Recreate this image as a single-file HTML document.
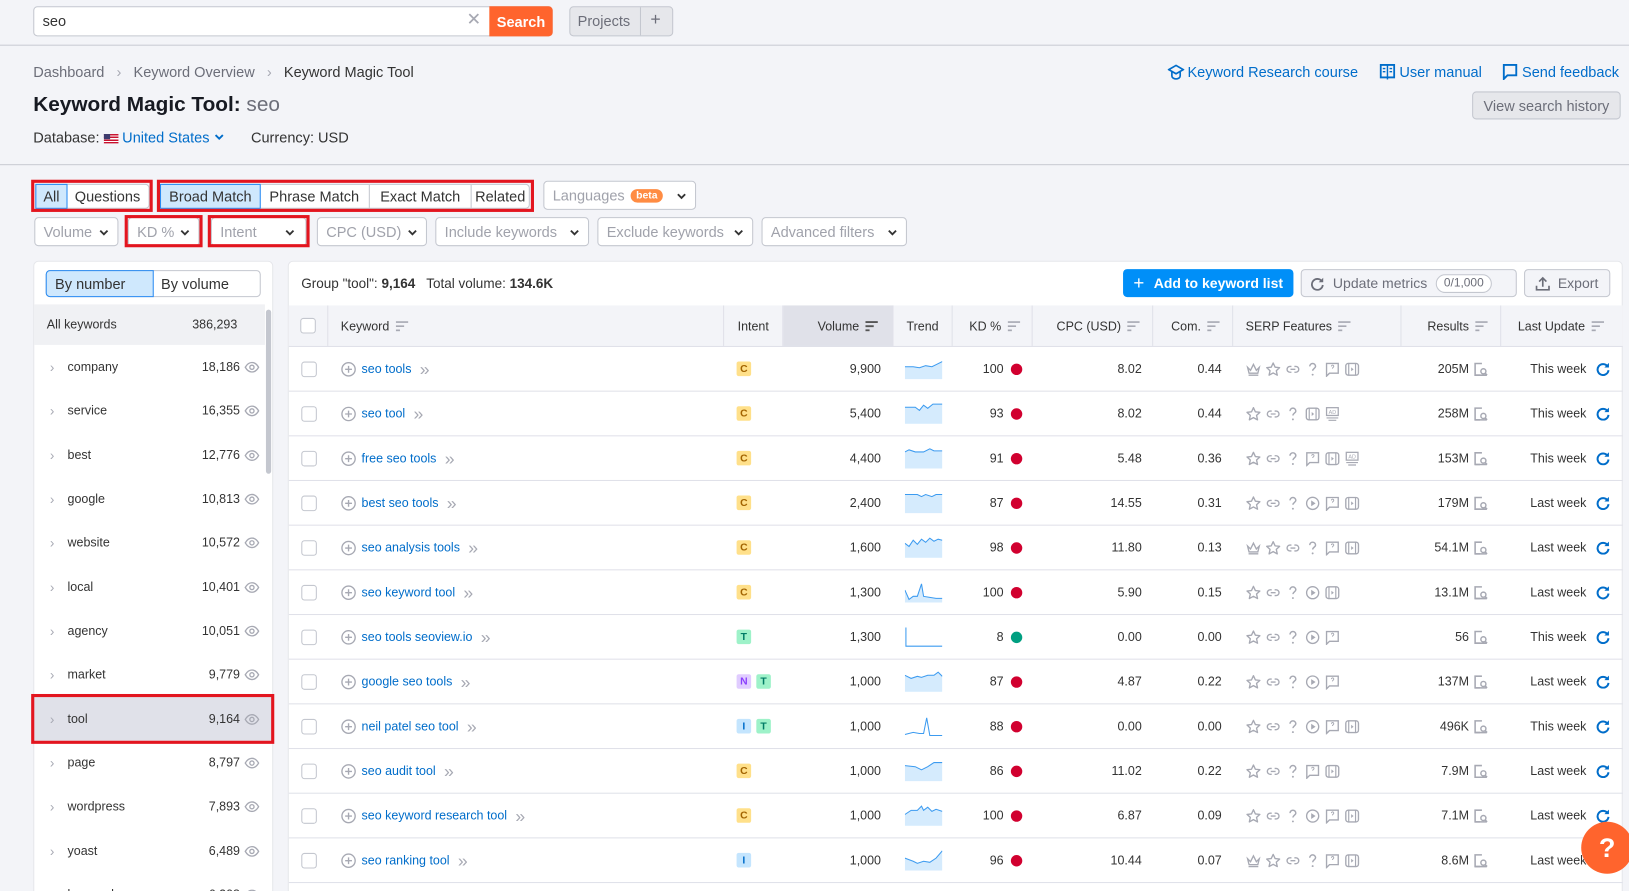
<!DOCTYPE html>
<html><head><meta charset="utf-8">
<style>
*{box-sizing:border-box;margin:0;padding:0}
html,body{width:1629px;height:891px;overflow:hidden;background:#f3f4f8}
body{font-family:"Liberation Sans",sans-serif;color:#333}
#w{position:absolute;left:0;top:0;width:1568px;height:858px;transform:scale(1.0389);transform-origin:0 0;background:#f3f4f8;overflow:hidden}
.a{position:absolute}
.btn{position:absolute;border:1px solid #c4c7cf;border-radius:4px;background:#fff;font-size:14px;color:#a0a2ab;display:flex;align-items:center;padding-left:8px}
.btn .cv{position:absolute;right:8px;top:8px}
.red{position:absolute;border:3px solid #e3151f}
.lnk{color:#006dca}
.row{position:absolute;left:278px;width:1284px;height:43px;display:flex;align-items:center;border-bottom:1px solid #e0e1e9;font-size:12px;color:#333}
.row>div{height:100%;display:flex;align-items:center}
.c1{width:38px;justify-content:center}
.c2{width:381px;padding-left:12px}
.c3{width:57px;padding-left:12px;gap:5px}
.c4{width:106px;justify-content:flex-end;padding-right:12px}
.c5{width:57px;padding-left:11px}
.c6{width:77px;justify-content:flex-end;padding-right:10px;gap:7px}
.c7{width:116px;justify-content:flex-end;padding-right:11px}
.c8{width:77px;justify-content:flex-end;padding-right:11px}
.c9{width:162px;padding-left:12px;gap:4px}
.c10{width:96px;justify-content:flex-end;padding-right:12px;gap:4px}
.c11{width:117px;justify-content:flex-end;padding-right:12px;gap:9px}
.cb{width:15px;height:15px;border:1px solid #c4c7cf;border-radius:3px;background:#fff}
.kw{color:#006dca;margin-left:5px;font-size:12px}
.gt{color:#a7a9b3;margin-left:8px;font-size:17px;line-height:1}
.b{width:14px;height:14px;border-radius:2px;font-size:10px;font-weight:bold;display:flex;align-items:center;justify-content:center}
.C{background:#ffe08a;color:#a26300}.T{background:#9ef2c9;color:#007c65}.N{background:#e0ccff;color:#8a3ffc}.I{background:#c4e5fe;color:#006dca}
.dot{width:11px;height:11px;border-radius:50%;background:#d1002f}
.hd{position:absolute;left:278px;top:294px;width:1284px;height:40px;background:#f3f4f8;display:flex;font-size:12px;color:#333;border-bottom:1px solid #e0e1e9}
.hd>div{height:100%;display:flex;align-items:center;border-right:1px solid #e0e1e9;gap:6px}
.li{position:absolute;left:32px;width:231px;height:42px;display:flex;align-items:center;font-size:12px;color:#333}
.li .ch{position:absolute;left:16px;color:#a7a9b3;font-size:13px}
.li .nm{position:absolute;left:33px}
.li .n{position:absolute;right:32px}
.li svg{position:absolute;right:13px}
</style></head><body><div id="w">
<svg width="0" height="0" style="position:absolute">
<defs>
<symbol id="srt" viewBox="0 0 12 10"><path d="M0 1h12M0 5h8M0 9h4" stroke="#a7a9b3" stroke-width="1.6"/></symbol>
<symbol id="srtd" viewBox="0 0 12 10"><path d="M0 1h12M0 5h8M0 9h4" stroke="#555" stroke-width="1.8"/></symbol>
<symbol id="cr" viewBox="0 0 16 16"><path d="M2 6l3 3 3-6 3 6 3-3-1.5 6h-9z M3 14h10" fill="none" stroke="#a7a9b3" stroke-width="1.4"/></symbol>
<symbol id="st" viewBox="0 0 16 16"><path d="M8 1.5l2 4.3 4.6.5-3.4 3.1 1 4.6L8 11.7 3.8 14l1-4.6L1.4 6.3 6 5.8z" fill="none" stroke="#a7a9b3" stroke-width="1.4" stroke-linejoin="round"/></symbol>
<symbol id="lk" viewBox="0 0 16 16"><path d="M6.5 5H5a3 3 0 000 6h1.5M9.5 5H11a3 3 0 010 6H9.5M5.5 8h5" fill="none" stroke="#a7a9b3" stroke-width="1.4"/></symbol>
<symbol id="q" viewBox="0 0 16 16"><path d="M5 5a3 3 0 116 0c0 2-3 2.2-3 4.5" fill="none" stroke="#a7a9b3" stroke-width="1.5"/><circle cx="8" cy="13.5" r="1" fill="#a7a9b3"/></symbol>
<symbol id="pl" viewBox="0 0 16 16"><circle cx="8" cy="8" r="6.2" fill="none" stroke="#a7a9b3" stroke-width="1.4"/><path d="M6.5 5v6l4.5-3z" fill="#a7a9b3"/></symbol>
<symbol id="bu" viewBox="0 0 16 16"><path d="M2 2h12v10H5l-3 3z" fill="none" stroke="#a7a9b3" stroke-width="1.4"/><path d="M7 5a1.2 1.2 0 112 .8c-.6.5-1 .7-1 1.5" fill="none" stroke="#a7a9b3" stroke-width="1"/></symbol>
<symbol id="vd" viewBox="0 0 16 16"><rect x="1.5" y="2" width="13" height="12" rx="2.5" fill="none" stroke="#a7a9b3" stroke-width="1.4"/><path d="M4.5 2v12M11.5 2v12" stroke="#a7a9b3" stroke-width="1.2"/><path d="M7 6v4l2.5-2z" fill="#a7a9b3"/></symbol>
<symbol id="ad" viewBox="0 0 16 16"><rect x="2" y="1.5" width="12" height="8" fill="none" stroke="#a7a9b3" stroke-width="1.3"/><text x="8" y="8" font-size="5.5" text-anchor="middle" fill="#a7a9b3" font-family="Liberation Sans">AD</text><path d="M2 12h12M4 14.5h8" stroke="#a7a9b3" stroke-width="1.2"/></symbol>
<symbol id="rs" viewBox="0 0 16 16"><path d="M9 2H2v12h5" fill="none" stroke="#a7a9b3" stroke-width="1.6"/><circle cx="10.5" cy="10" r="2.6" fill="none" stroke="#a7a9b3" stroke-width="1.5"/><path d="M12.3 12l2 2" stroke="#a7a9b3" stroke-width="1.6"/><path d="M2 14h12" stroke="#a7a9b3" stroke-width="1.6"/></symbol>
<symbol id="rf" viewBox="0 0 16 16"><path d="M13 5.5A6 6 0 1014 9.5" fill="none" stroke="#006dca" stroke-width="2.2"/><path d="M14.5 1.5v5h-5z" fill="#006dca"/></symbol>
<symbol id="pc" viewBox="0 0 16 16"><circle cx="8" cy="8" r="6.8" fill="none" stroke="#a7a9b3" stroke-width="1.4"/><path d="M8 4.5v7M4.5 8h7" stroke="#a7a9b3" stroke-width="1.4"/></symbol>
<symbol id="eye" viewBox="0 0 16 12"><path d="M1 6c2-3.5 4.5-5 7-5s5 1.5 7 5c-2 3.5-4.5 5-7 5s-5-1.5-7-5z" fill="none" stroke="#a7a9b3" stroke-width="1.4"/><circle cx="8" cy="6" r="2.2" fill="none" stroke="#a7a9b3" stroke-width="1.4"/></symbol>
<symbol id="dn" viewBox="0 0 10 8"><path d="M1.5 2l3.5 3.5L8.5 2" fill="none" stroke="#333" stroke-width="1.8"/></symbol>
</defs></svg>

<!-- top bar -->
<div class="a" style="left:0;top:43px;width:1568px;height:1px;background:#c9cbd3"></div>
<div class="a" style="left:32px;top:6px;width:500px;height:29px;border:1px solid #c4c7cf;border-radius:4px;background:#fff"></div>
<div class="a" style="left:41px;top:12px;font-size:14px;color:#333">seo</div>
<div class="a" style="left:449px;top:9px;font-size:17px;color:#a7a9b3">✕</div>
<div class="a" style="left:471px;top:6px;width:61px;height:29px;background:#ff642d;border-radius:0 4px 4px 0;color:#fff;font-size:14px;font-weight:bold;display:flex;align-items:center;justify-content:center">Search</div>
<div class="a" style="left:548px;top:6px;width:100px;height:29px;background:#e6e7eb;border:1px solid #c4c7cf;border-radius:4px"></div>
<div class="a" style="left:616px;top:7px;width:1px;height:27px;background:#c4c7cf"></div>
<div class="a" style="left:556px;top:12px;font-size:14px;color:#6c6e79">Projects</div>
<div class="a" style="left:626px;top:9px;font-size:17px;color:#6c6e79">+</div>

<!-- breadcrumbs/title -->
<div class="a" style="left:32px;top:61px;font-size:14px;color:#6c6e79">Dashboard &nbsp;&nbsp;<span style="color:#a7a9b3">›</span>&nbsp;&nbsp; Keyword Overview &nbsp;&nbsp;<span style="color:#a7a9b3">›</span>&nbsp;&nbsp; <span style="color:#333">Keyword Magic Tool</span></div>
<div class="a" style="left:32px;top:90px;font-size:20px;font-weight:bold;color:#171a22">Keyword Magic Tool: <span style="font-weight:normal;color:#6c6e79">seo</span></div>
<div class="a" style="left:32px;top:124px;font-size:14px;color:#333">Database: <span style="display:inline-block;width:14px;height:9px;background:repeating-linear-gradient(#c8102e 0 1.3px,#fff 1.3px 2.6px);position:relative;vertical-align:-1px"><span style="position:absolute;left:0;top:0;width:6px;height:5px;background:#3c3b6e"></span></span> <span class="lnk">United States</span> <svg width="10" height="8" style="vertical-align:1px"><path d="M1.5 2l3.5 3.5L8.5 2" fill="none" stroke="#006dca" stroke-width="1.8"/></svg><span style="margin-left:26px">Currency: USD</span></div>
<div class="a lnk" style="left:1124px;top:61px;font-size:14px;display:flex;align-items:center;gap:3px"><svg width="16" height="16" viewBox="0 0 16 16"><path d="M1 6l7-4 7 4-7 4z" fill="none" stroke="#006dca" stroke-width="1.6"/><path d="M4 8v4a4 3 0 008 0V8" fill="none" stroke="#006dca" stroke-width="1.6"/></svg>Keyword Research course</div>
<div class="a lnk" style="left:1328px;top:61px;font-size:14px;display:flex;align-items:center;gap:4px"><svg width="15" height="16" viewBox="0 0 15 16"><rect x="1" y="1.5" width="13" height="12" fill="none" stroke="#006dca" stroke-width="1.8"/><path d="M7.5 1.5v14M3 5h2.5M9.5 5H12M3 8h2.5M9.5 8H12" stroke="#006dca" stroke-width="1.4"/></svg>User manual</div>
<div class="a lnk" style="left:1446px;top:61px;font-size:14px;display:flex;align-items:center;gap:4px"><svg width="15" height="16" viewBox="0 0 15 16"><path d="M1.5 1.5h12v10H5l-3.5 3.5z" fill="none" stroke="#006dca" stroke-width="1.8"/></svg>Send feedback</div>
<div class="a" style="left:1417px;top:88px;width:143px;height:27px;background:#e6e7eb;border:1px solid #c4c7cf;border-radius:4px;font-size:14px;color:#6c6e79;display:flex;align-items:center;justify-content:center">View search history</div>
<div class="a" style="left:0;top:158px;width:1568px;height:1px;background:#c9cbd3"></div>

<!-- filter row 1 -->
<div class="a" style="left:34px;top:177px;width:110px;height:24px;border:1px solid #c4c7cf;border-radius:4px;background:#fff;font-size:14px;display:flex"><div style="width:31px;background:#cfe8fd;border:1px solid #2a8bf2;display:flex;align-items:center;justify-content:center;margin:-1px">All</div><div style="flex:1;display:flex;align-items:center;justify-content:center">Questions</div></div>
<div class="red" style="left:30px;top:173px;width:117px;height:31px"></div>
<div class="a" style="left:154px;top:177px;width:356px;height:24px;border:1px solid #c4c7cf;border-radius:4px;background:#fff;font-size:14px;display:flex"><div style="width:97px;background:#cfe8fd;border:1px solid #2a8bf2;margin:-1px;display:flex;align-items:center;justify-content:center;color:#333">Broad Match</div><div style="width:106px;border-right:1px solid #c4c7cf;display:flex;align-items:center;justify-content:center">Phrase Match</div><div style="width:98px;border-right:1px solid #c4c7cf;display:flex;align-items:center;justify-content:center">Exact Match</div><div style="flex:1;display:flex;align-items:center;justify-content:center">Related</div></div>
<div class="red" style="left:151px;top:173px;width:363px;height:31px"></div>
<div class="btn" style="left:523px;top:174px;width:147px;height:28px">Languages <span style="margin-left:6px;background:#ff8c43;color:#fff;font-size:10px;font-weight:bold;border-radius:8px;padding:1px 5px">beta</span><svg class="cv" width="10" height="8" style="top:10px"><use href="#dn"/></svg></div>

<!-- filter row 2 -->
<div class="btn" style="left:33px;top:209px;width:81px;height:28px">Volume<svg class="cv" width="10" height="8" style="top:10px"><use href="#dn"/></svg></div>
<div class="btn" style="left:123px;top:209px;width:69px;height:28px">KD %<svg class="cv" width="10" height="8" style="top:10px"><use href="#dn"/></svg></div>
<div class="red" style="left:120px;top:207px;width:75px;height:31px"></div>
<div class="btn" style="left:203px;top:209px;width:92px;height:28px">Intent<svg class="cv" width="10" height="8" style="top:10px;right:10px"><use href="#dn"/></svg></div>
<div class="red" style="left:200px;top:207px;width:98px;height:31px"></div>
<div class="btn" style="left:305px;top:209px;width:106px;height:28px">CPC (USD)<svg class="cv" width="10" height="8" style="top:10px"><use href="#dn"/></svg></div>
<div class="btn" style="left:419px;top:209px;width:148px;height:28px">Include keywords<svg class="cv" width="10" height="8" style="top:10px"><use href="#dn"/></svg></div>
<div class="btn" style="left:575px;top:209px;width:150px;height:28px">Exclude keywords<svg class="cv" width="10" height="8" style="top:10px"><use href="#dn"/></svg></div>
<div class="btn" style="left:733px;top:209px;width:140px;height:28px">Advanced filters<svg class="cv" width="10" height="8" style="top:10px"><use href="#dn"/></svg></div>

<!-- left panel -->
<div class="a" style="left:32px;top:251px;width:231px;height:620px;background:#fff;border:1px solid #e6e7eb;border-radius:5px"></div>
<div class="a" style="left:44px;top:260px;width:207px;height:26px;border:1px solid #c4c7cf;border-radius:4px;background:#fff;display:flex;font-size:14px;color:#333"><div style="width:104px;background:#cfe8fd;border:1px solid #2a8bf2;margin:-1px;border-radius:4px 0 0 4px;display:flex;align-items:center;padding-left:8px">By number</div><div style="display:flex;align-items:center;padding-left:8px">By volume</div></div>
<div class="a" style="left:33px;top:293px;width:222px;height:39px;background:#f0f1f4"></div>
<div class="a" style="left:45px;top:305px;font-size:12px;color:#333">All keywords</div>
<div class="a" style="left:185px;top:305px;font-size:12px;color:#333">386,293</div>
<div class="a" style="left:256px;top:298px;width:5px;height:158px;background:#c4c7cf;border-radius:3px"></div>

<div class="li" style="top:332px"><span class="ch">›</span><span class="nm">company</span><span class="n">18,186</span><svg width="15" height="11"><use href="#eye"/></svg></div>
<div class="li" style="top:374px"><span class="ch">›</span><span class="nm">service</span><span class="n">16,355</span><svg width="15" height="11"><use href="#eye"/></svg></div>
<div class="li" style="top:417px"><span class="ch">›</span><span class="nm">best</span><span class="n">12,776</span><svg width="15" height="11"><use href="#eye"/></svg></div>
<div class="li" style="top:459px"><span class="ch">›</span><span class="nm">google</span><span class="n">10,813</span><svg width="15" height="11"><use href="#eye"/></svg></div>
<div class="li" style="top:501px"><span class="ch">›</span><span class="nm">website</span><span class="n">10,572</span><svg width="15" height="11"><use href="#eye"/></svg></div>
<div class="li" style="top:544px"><span class="ch">›</span><span class="nm">local</span><span class="n">10,401</span><svg width="15" height="11"><use href="#eye"/></svg></div>
<div class="li" style="top:586px"><span class="ch">›</span><span class="nm">agency</span><span class="n">10,051</span><svg width="15" height="11"><use href="#eye"/></svg></div>
<div class="li" style="top:628px"><span class="ch">›</span><span class="nm">market</span><span class="n">9,779</span><svg width="15" height="11"><use href="#eye"/></svg></div>
<div class="li" style="top:671px;background:#e0e1e9"><span class="ch">›</span><span class="nm">tool</span><span class="n">9,164</span><svg width="15" height="11"><use href="#eye"/></svg></div>
<div class="red" style="left:30px;top:668px;width:234px;height:48px"></div>
<div class="li" style="top:713px"><span class="ch">›</span><span class="nm">page</span><span class="n">8,797</span><svg width="15" height="11"><use href="#eye"/></svg></div>
<div class="li" style="top:755px"><span class="ch">›</span><span class="nm">wordpress</span><span class="n">7,893</span><svg width="15" height="11"><use href="#eye"/></svg></div>
<div class="li" style="top:798px"><span class="ch">›</span><span class="nm">yoast</span><span class="n">6,489</span><svg width="15" height="11"><use href="#eye"/></svg></div>
<div class="li" style="top:840px"><span class="ch">›</span><span class="nm">keyword</span><span class="n">6,208</span><svg width="15" height="11"><use href="#eye"/></svg></div>

<!-- right panel -->
<div class="a" style="left:277px;top:251px;width:1285px;height:620px;background:#fff;border:1px solid #e6e7eb;border-radius:5px"></div>
<div class="a" style="left:290px;top:265px;font-size:13px;color:#333">Group "tool": <b>9,164</b> &nbsp; Total volume: <b>134.6K</b></div>
<div class="a" style="left:1081px;top:259px;width:164px;height:27px;background:#008ff8;border-radius:4px;color:#fff;font-size:13.5px;font-weight:bold;display:flex;align-items:center;justify-content:center"><span style="font-size:18px;font-weight:normal;margin-right:9px">+</span>Add to keyword list</div>
<div class="a" style="left:1252px;top:259px;width:208px;height:27px;background:#f3f4f8;border:1px solid #c4c7cf;border-radius:4px;color:#6c6e79;font-size:13.5px;display:flex;align-items:center;padding-left:8px"><svg width="14" height="14" viewBox="0 0 16 16" style="margin-right:8px"><path d="M13 5.5A6 6 0 1014 9.5" fill="none" stroke="#6c6e79" stroke-width="2"/><path d="M14.5 1.5v5h-5z" fill="#6c6e79"/></svg>Update metrics<span style="margin-left:8px;border:1px solid #c4c7cf;background:#fff;border-radius:10px;font-size:11.5px;padding:2px 7px">0/1,000</span></div>
<div class="a" style="left:1467px;top:259px;width:83px;height:27px;background:#f3f4f8;border:1px solid #c4c7cf;border-radius:4px;color:#6c6e79;font-size:13.5px;display:flex;align-items:center;justify-content:center;gap:7px"><svg width="14" height="14" viewBox="0 0 14 14"><path d="M7 10V1.5M3.5 5L7 1.5 10.5 5M1 9v4h12V9" fill="none" stroke="#6c6e79" stroke-width="1.6"/></svg>Export</div>

<div class="hd">
<div style="width:38px;justify-content:center"><div class="cb"></div></div>
<div style="width:381px;padding-left:12px">Keyword<svg width="12" height="10"><use href="#srt"/></svg></div>
<div style="width:57px;justify-content:center">Intent</div>
<div style="width:106px;justify-content:flex-end;padding-right:14px;background:#e0e1e9">Volume<svg width="12" height="10"><use href="#srtd"/></svg></div>
<div style="width:57px;justify-content:center">Trend</div>
<div style="width:77px;padding-left:16px">KD %<svg width="12" height="10"><use href="#srt"/></svg></div>
<div style="width:116px;justify-content:flex-end;padding-right:12px">CPC (USD)<svg width="12" height="10"><use href="#srt"/></svg></div>
<div style="width:77px;justify-content:flex-end;padding-right:12px">Com.<svg width="12" height="10"><use href="#srt"/></svg></div>
<div style="width:162px;padding-left:12px">SERP Features<svg width="12" height="10"><use href="#srt"/></svg></div>
<div style="width:96px;justify-content:flex-end;padding-right:12px">Results<svg width="12" height="10"><use href="#srt"/></svg></div>
<div style="width:117px;padding-left:16px;border-right:0">Last Update<svg width="12" height="10"><use href="#srt"/></svg></div>
</div>

<!-- rows -->
<div class="row" style="top:334px"><div class="c1"><div class="cb"></div></div><div class="c2"><svg width="15" height="15"><use href="#pc"/></svg><span class="kw">seo tools</span><span class="gt">»</span></div><div class="c3"><div class="b C">C</div></div><div class="c4">9,900</div><div class="c5"><svg width="36" height="20"><path d="M0 8 L8 8 L14 9 L20 7 L26 8 L30 6 L36 3 L36 20 L0 20Z" fill="#d5ebfd"/><path d="M0 8 L8 8 L14 9 L20 7 L26 8 L30 6 L36 3" fill="none" stroke="#3c9bf0" stroke-width="1"/></svg></div><div class="c6">100<div class="dot"></div></div><div class="c7">8.02</div><div class="c8">0.44</div><div class="c9"><svg width="15" height="15"><use href="#cr"/></svg><svg width="15" height="15"><use href="#st"/></svg><svg width="15" height="15"><use href="#lk"/></svg><svg width="15" height="15"><use href="#q"/></svg><svg width="15" height="15"><use href="#bu"/></svg><svg width="15" height="15"><use href="#vd"/></svg></div><div class="c10">205M<svg width="15" height="15"><use href="#rs"/></svg></div><div class="c11">This week<svg width="14" height="14"><use href="#rf"/></svg></div></div>

<div class="row" style="top:377px"><div class="c1"><div class="cb"></div></div><div class="c2"><svg width="15" height="15"><use href="#pc"/></svg><span class="kw">seo tool</span><span class="gt">»</span></div><div class="c3"><div class="b C">C</div></div><div class="c4">5,400</div><div class="c5"><svg width="36" height="20"><path d="M0 4 L10 4 L14 7 L18 2 L22 5 L27 1 L36 1 L36 20 L0 20Z" fill="#d5ebfd"/><path d="M0 4 L10 4 L14 7 L18 2 L22 5 L27 1 L36 1" fill="none" stroke="#3c9bf0"/></svg></div><div class="c6">93<div class="dot"></div></div><div class="c7">8.02</div><div class="c8">0.44</div><div class="c9"><svg width="15" height="15"><use href="#st"/></svg><svg width="15" height="15"><use href="#lk"/></svg><svg width="15" height="15"><use href="#q"/></svg><svg width="15" height="15"><use href="#vd"/></svg><svg width="15" height="15"><use href="#ad"/></svg></div><div class="c10">258M<svg width="15" height="15"><use href="#rs"/></svg></div><div class="c11">This week<svg width="14" height="14"><use href="#rf"/></svg></div></div>

<div class="row" style="top:420px"><div class="c1"><div class="cb"></div></div><div class="c2"><svg width="15" height="15"><use href="#pc"/></svg><span class="kw">free seo tools</span><span class="gt">»</span></div><div class="c3"><div class="b C">C</div></div><div class="c4">4,400</div><div class="c5"><svg width="36" height="20"><path d="M0 4 L4 2 L10 4 L18 4 L24 1 L28 3 L36 3 L36 20 L0 20Z" fill="#d5ebfd"/><path d="M0 4 L4 2 L10 4 L18 4 L24 1 L28 3 L36 3" fill="none" stroke="#3c9bf0"/></svg></div><div class="c6">91<div class="dot"></div></div><div class="c7">5.48</div><div class="c8">0.36</div><div class="c9"><svg width="15" height="15"><use href="#st"/></svg><svg width="15" height="15"><use href="#lk"/></svg><svg width="15" height="15"><use href="#q"/></svg><svg width="15" height="15"><use href="#bu"/></svg><svg width="15" height="15"><use href="#vd"/></svg><svg width="15" height="15"><use href="#ad"/></svg></div><div class="c10">153M<svg width="15" height="15"><use href="#rs"/></svg></div><div class="c11">This week<svg width="14" height="14"><use href="#rf"/></svg></div></div>

<div class="row" style="top:463px"><div class="c1"><div class="cb"></div></div><div class="c2"><svg width="15" height="15"><use href="#pc"/></svg><span class="kw">best seo tools</span><span class="gt">»</span></div><div class="c3"><div class="b C">C</div></div><div class="c4">2,400</div><div class="c5"><svg width="36" height="20"><path d="M0 2 L12 2 L16 4 L20 2 L26 4 L30 2 L36 2 L36 20 L0 20Z" fill="#d5ebfd"/><path d="M0 2 L12 2 L16 4 L20 2 L26 4 L30 2 L36 2" fill="none" stroke="#3c9bf0"/></svg></div><div class="c6">87<div class="dot"></div></div><div class="c7">14.55</div><div class="c8">0.31</div><div class="c9"><svg width="15" height="15"><use href="#st"/></svg><svg width="15" height="15"><use href="#lk"/></svg><svg width="15" height="15"><use href="#q"/></svg><svg width="15" height="15"><use href="#pl"/></svg><svg width="15" height="15"><use href="#bu"/></svg><svg width="15" height="15"><use href="#vd"/></svg></div><div class="c10">179M<svg width="15" height="15"><use href="#rs"/></svg></div><div class="c11">Last week<svg width="14" height="14"><use href="#rf"/></svg></div></div>

<div class="row" style="top:506px"><div class="c1"><div class="cb"></div></div><div class="c2"><svg width="15" height="15"><use href="#pc"/></svg><span class="kw">seo analysis tools</span><span class="gt">»</span></div><div class="c3"><div class="b C">C</div></div><div class="c4">1,600</div><div class="c5"><svg width="36" height="20"><path d="M0 6 L4 9 L8 3 L12 7 L16 2 L20 5 L24 1 L28 4 L32 2 L36 3 L36 20 L0 20Z" fill="#d5ebfd"/><path d="M0 6 L4 9 L8 3 L12 7 L16 2 L20 5 L24 1 L28 4 L32 2 L36 3" fill="none" stroke="#3c9bf0"/></svg></div><div class="c6">98<div class="dot"></div></div><div class="c7">11.80</div><div class="c8">0.13</div><div class="c9"><svg width="15" height="15"><use href="#cr"/></svg><svg width="15" height="15"><use href="#st"/></svg><svg width="15" height="15"><use href="#lk"/></svg><svg width="15" height="15"><use href="#q"/></svg><svg width="15" height="15"><use href="#bu"/></svg><svg width="15" height="15"><use href="#vd"/></svg></div><div class="c10">54.1M<svg width="15" height="15"><use href="#rs"/></svg></div><div class="c11">Last week<svg width="14" height="14"><use href="#rf"/></svg></div></div>

<div class="row" style="top:549px"><div class="c1"><div class="cb"></div></div><div class="c2"><svg width="15" height="15"><use href="#pc"/></svg><span class="kw">seo keyword tool</span><span class="gt">»</span></div><div class="c3"><div class="b C">C</div></div><div class="c4">1,300</div><div class="c5"><svg width="36" height="20"><path d="M0 8 L4 17 L8 14 L12 14 L16 2 L18 14 L24 15 L30 16 L36 16 L36 20 L0 20Z" fill="#d5ebfd"/><path d="M0 8 L4 17 L8 14 L12 14 L16 2 L18 14 L24 15 L30 16 L36 16" fill="none" stroke="#3c9bf0"/></svg></div><div class="c6">100<div class="dot"></div></div><div class="c7">5.90</div><div class="c8">0.15</div><div class="c9"><svg width="15" height="15"><use href="#st"/></svg><svg width="15" height="15"><use href="#lk"/></svg><svg width="15" height="15"><use href="#q"/></svg><svg width="15" height="15"><use href="#pl"/></svg><svg width="15" height="15"><use href="#vd"/></svg></div><div class="c10">13.1M<svg width="15" height="15"><use href="#rs"/></svg></div><div class="c11">Last week<svg width="14" height="14"><use href="#rf"/></svg></div></div>

<div class="row" style="top:592px"><div class="c1"><div class="cb"></div></div><div class="c2"><svg width="15" height="15"><use href="#pc"/></svg><span class="kw">seo tools seoview.io</span><span class="gt">»</span></div><div class="c3"><div class="b T">T</div></div><div class="c4">1,300</div><div class="c5"><svg width="36" height="20"><path d="M1 1 L1 19 L36 19" fill="none" stroke="#3c9bf0"/></svg></div><div class="c6">8<div class="dot" style="background:#009f81"></div></div><div class="c7">0.00</div><div class="c8">0.00</div><div class="c9"><svg width="15" height="15"><use href="#st"/></svg><svg width="15" height="15"><use href="#lk"/></svg><svg width="15" height="15"><use href="#q"/></svg><svg width="15" height="15"><use href="#pl"/></svg><svg width="15" height="15"><use href="#bu"/></svg></div><div class="c10">56<svg width="15" height="15"><use href="#rs"/></svg></div><div class="c11">This week<svg width="14" height="14"><use href="#rf"/></svg></div></div>

<div class="row" style="top:635px"><div class="c1"><div class="cb"></div></div><div class="c2"><svg width="15" height="15"><use href="#pc"/></svg><span class="kw">google seo tools</span><span class="gt">»</span></div><div class="c3"><div class="b N">N</div><div class="b T">T</div></div><div class="c4">1,000</div><div class="c5"><svg width="36" height="20"><path d="M0 4 L6 7 L12 5 L16 6 L22 4 L28 4 L32 1 L36 5 L36 20 L0 20Z" fill="#d5ebfd"/><path d="M0 4 L6 7 L12 5 L16 6 L22 4 L28 4 L32 1 L36 5" fill="none" stroke="#3c9bf0"/></svg></div><div class="c6">87<div class="dot"></div></div><div class="c7">4.87</div><div class="c8">0.22</div><div class="c9"><svg width="15" height="15"><use href="#st"/></svg><svg width="15" height="15"><use href="#lk"/></svg><svg width="15" height="15"><use href="#q"/></svg><svg width="15" height="15"><use href="#pl"/></svg><svg width="15" height="15"><use href="#bu"/></svg></div><div class="c10">137M<svg width="15" height="15"><use href="#rs"/></svg></div><div class="c11">Last week<svg width="14" height="14"><use href="#rf"/></svg></div></div>

<div class="row" style="top:678px"><div class="c1"><div class="cb"></div></div><div class="c2"><svg width="15" height="15"><use href="#pc"/></svg><span class="kw">neil patel seo tool</span><span class="gt">»</span></div><div class="c3"><div class="b I">I</div><div class="b T">T</div></div><div class="c4">1,000</div><div class="c5"><svg width="36" height="20"><path d="M0 18 L8 16 L14 17 L18 17 L21 2 L24 19 L36 19" fill="none" stroke="#3c9bf0"/></svg></div><div class="c6">88<div class="dot"></div></div><div class="c7">0.00</div><div class="c8">0.00</div><div class="c9"><svg width="15" height="15"><use href="#st"/></svg><svg width="15" height="15"><use href="#lk"/></svg><svg width="15" height="15"><use href="#q"/></svg><svg width="15" height="15"><use href="#pl"/></svg><svg width="15" height="15"><use href="#bu"/></svg><svg width="15" height="15"><use href="#vd"/></svg></div><div class="c10">496K<svg width="15" height="15"><use href="#rs"/></svg></div><div class="c11">This week<svg width="14" height="14"><use href="#rf"/></svg></div></div>

<div class="row" style="top:721px"><div class="c1"><div class="cb"></div></div><div class="c2"><svg width="15" height="15"><use href="#pc"/></svg><span class="kw">seo audit tool</span><span class="gt">»</span></div><div class="c3"><div class="b C">C</div></div><div class="c4">1,000</div><div class="c5"><svg width="36" height="20"><path d="M0 5 L10 6 L16 9 L22 6 L28 2 L36 2 L36 20 L0 20Z" fill="#d5ebfd"/><path d="M0 5 L10 6 L16 9 L22 6 L28 2 L36 2" fill="none" stroke="#3c9bf0"/></svg></div><div class="c6">86<div class="dot"></div></div><div class="c7">11.02</div><div class="c8">0.22</div><div class="c9"><svg width="15" height="15"><use href="#st"/></svg><svg width="15" height="15"><use href="#lk"/></svg><svg width="15" height="15"><use href="#q"/></svg><svg width="15" height="15"><use href="#bu"/></svg><svg width="15" height="15"><use href="#vd"/></svg></div><div class="c10">7.9M<svg width="15" height="15"><use href="#rs"/></svg></div><div class="c11">Last week<svg width="14" height="14"><use href="#rf"/></svg></div></div>

<div class="row" style="top:764px"><div class="c1"><div class="cb"></div></div><div class="c2"><svg width="15" height="15"><use href="#pc"/></svg><span class="kw">seo keyword research tool</span><span class="gt">»</span></div><div class="c3"><div class="b C">C</div></div><div class="c4">1,000</div><div class="c5"><svg width="36" height="20"><path d="M0 9 L6 5 L12 5 L16 1 L18 5 L22 2 L26 6 L30 4 L36 6 L36 20 L0 20Z" fill="#d5ebfd"/><path d="M0 9 L6 5 L12 5 L16 1 L18 5 L22 2 L26 6 L30 4 L36 6" fill="none" stroke="#3c9bf0"/></svg></div><div class="c6">100<div class="dot"></div></div><div class="c7">6.87</div><div class="c8">0.09</div><div class="c9"><svg width="15" height="15"><use href="#st"/></svg><svg width="15" height="15"><use href="#lk"/></svg><svg width="15" height="15"><use href="#q"/></svg><svg width="15" height="15"><use href="#pl"/></svg><svg width="15" height="15"><use href="#bu"/></svg><svg width="15" height="15"><use href="#vd"/></svg></div><div class="c10">7.1M<svg width="15" height="15"><use href="#rs"/></svg></div><div class="c11">Last week<svg width="14" height="14"><use href="#rf"/></svg></div></div>

<div class="row" style="top:807px"><div class="c1"><div class="cb"></div></div><div class="c2"><svg width="15" height="15"><use href="#pc"/></svg><span class="kw">seo ranking tool</span><span class="gt">»</span></div><div class="c3"><div class="b I">I</div></div><div class="c4">1,000</div><div class="c5"><svg width="36" height="20"><path d="M0 8 L8 11 L12 13 L18 11 L24 12 L30 8 L36 1 L36 20 L0 20Z" fill="#d5ebfd"/><path d="M0 8 L8 11 L12 13 L18 11 L24 12 L30 8 L36 1" fill="none" stroke="#3c9bf0"/></svg></div><div class="c6">96<div class="dot"></div></div><div class="c7">10.44</div><div class="c8">0.07</div><div class="c9"><svg width="15" height="15"><use href="#cr"/></svg><svg width="15" height="15"><use href="#st"/></svg><svg width="15" height="15"><use href="#lk"/></svg><svg width="15" height="15"><use href="#q"/></svg><svg width="15" height="15"><use href="#bu"/></svg><svg width="15" height="15"><use href="#vd"/></svg></div><div class="c10">8.6M<svg width="15" height="15"><use href="#rs"/></svg></div><div class="c11">Last week<svg width="14" height="14"><use href="#rf"/></svg></div></div>

<!-- help -->
<div class="a" style="left:1522px;top:791px;width:50px;height:50px;border-radius:50%;background:#ff642d;color:#fff;font-size:26px;font-weight:bold;display:flex;align-items:center;justify-content:center">?</div>
</div></body></html>
